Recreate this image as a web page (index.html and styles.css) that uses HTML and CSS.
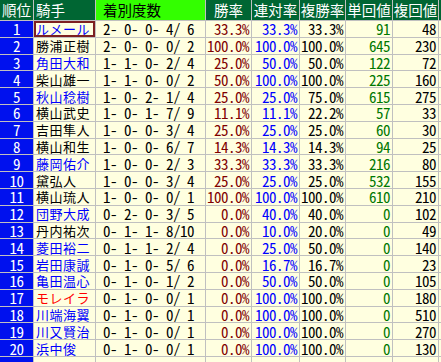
FILE: index.html
```html
<!DOCTYPE html>
<html lang="ja">
<head>
<meta charset="utf-8">
<link rel="stylesheet" href="styles.css">
</head>
<body>
<div class="board">
  <div class="row head">
    <div class="c h h-l">順位</div>
    <div class="c h h-l">騎手</div>
    <div class="c h h-rec">着別度数</div>
    <div class="c h">勝率</div>
    <div class="c h">連対率</div>
    <div class="c h">複勝率</div>
    <div class="c h">単回値</div>
    <div class="c h">複回値</div>
    <div class="c h"></div>
  </div>

  <div class="row"><div class="c rank">1</div><div class="c name blue sel">ルメール</div><div class="c rec">2- 0- 0- 4/ 6</div><div class="c num win">33.3%</div><div class="c num ren">33.3%</div><div class="c num">33.3%</div><div class="c num tan">91</div><div class="c num">48</div><div class="c"></div></div>
  <div class="row"><div class="c rank">2</div><div class="c name">勝浦正樹</div><div class="c rec">2- 0- 0- 0/ 2</div><div class="c num win">100.0%</div><div class="c num ren">100.0%</div><div class="c num">100.0%</div><div class="c num tan">645</div><div class="c num">230</div><div class="c"></div></div>
  <div class="row"><div class="c rank">3</div><div class="c name blue">角田大和</div><div class="c rec">1- 1- 0- 2/ 4</div><div class="c num win">25.0%</div><div class="c num ren">50.0%</div><div class="c num">50.0%</div><div class="c num tan">122</div><div class="c num">72</div><div class="c"></div></div>
  <div class="row"><div class="c rank">4</div><div class="c name">柴山雄一</div><div class="c rec">1- 1- 0- 0/ 2</div><div class="c num win">50.0%</div><div class="c num ren">100.0%</div><div class="c num">100.0%</div><div class="c num tan">225</div><div class="c num">160</div><div class="c"></div></div>
  <div class="row"><div class="c rank">5</div><div class="c name blue">秋山稔樹</div><div class="c rec">1- 0- 2- 1/ 4</div><div class="c num win">25.0%</div><div class="c num ren">25.0%</div><div class="c num">75.0%</div><div class="c num tan">615</div><div class="c num">275</div><div class="c"></div></div>
  <div class="row"><div class="c rank">6</div><div class="c name">横山武史</div><div class="c rec">1- 0- 1- 7/ 9</div><div class="c num win">11.1%</div><div class="c num ren">11.1%</div><div class="c num">22.2%</div><div class="c num tan">57</div><div class="c num">33</div><div class="c"></div></div>
  <div class="row"><div class="c rank">7</div><div class="c name">吉田隼人</div><div class="c rec">1- 0- 0- 3/ 4</div><div class="c num win">25.0%</div><div class="c num ren">25.0%</div><div class="c num">25.0%</div><div class="c num tan">60</div><div class="c num">30</div><div class="c"></div></div>
  <div class="row"><div class="c rank">8</div><div class="c name">横山和生</div><div class="c rec">1- 0- 0- 6/ 7</div><div class="c num win">14.3%</div><div class="c num ren">14.3%</div><div class="c num">14.3%</div><div class="c num tan">94</div><div class="c num">25</div><div class="c"></div></div>
  <div class="row"><div class="c rank">9</div><div class="c name blue">藤岡佑介</div><div class="c rec">1- 0- 0- 2/ 3</div><div class="c num win">33.3%</div><div class="c num ren">33.3%</div><div class="c num">33.3%</div><div class="c num tan">216</div><div class="c num">80</div><div class="c"></div></div>
  <div class="row"><div class="c rank">10</div><div class="c name">黛弘人</div><div class="c rec">1- 0- 0- 3/ 4</div><div class="c num win">25.0%</div><div class="c num ren">25.0%</div><div class="c num">25.0%</div><div class="c num tan">532</div><div class="c num">155</div><div class="c"></div></div>
  <div class="row"><div class="c rank">11</div><div class="c name">横山琉人</div><div class="c rec">1- 0- 0- 0/ 1</div><div class="c num win">100.0%</div><div class="c num ren">100.0%</div><div class="c num">100.0%</div><div class="c num tan">610</div><div class="c num">210</div><div class="c"></div></div>
  <div class="row"><div class="c rank">12</div><div class="c name blue">団野大成</div><div class="c rec">0- 2- 0- 3/ 5</div><div class="c num win">0.0%</div><div class="c num ren">40.0%</div><div class="c num">40.0%</div><div class="c num tan">0</div><div class="c num">102</div><div class="c"></div></div>
  <div class="row"><div class="c rank">13</div><div class="c name">丹内祐次</div><div class="c rec">0- 1- 1- 8/10</div><div class="c num win">0.0%</div><div class="c num ren">10.0%</div><div class="c num">20.0%</div><div class="c num tan">0</div><div class="c num">49</div><div class="c"></div></div>
  <div class="row"><div class="c rank">14</div><div class="c name blue">菱田裕二</div><div class="c rec">0- 1- 1- 2/ 4</div><div class="c num win">0.0%</div><div class="c num ren">25.0%</div><div class="c num">50.0%</div><div class="c num tan">0</div><div class="c num">140</div><div class="c"></div></div>
  <div class="row"><div class="c rank">15</div><div class="c name blue">岩田康誠</div><div class="c rec">0- 1- 0- 5/ 6</div><div class="c num win">0.0%</div><div class="c num ren">16.7%</div><div class="c num">16.7%</div><div class="c num tan">0</div><div class="c num">23</div><div class="c"></div></div>
  <div class="row"><div class="c rank">16</div><div class="c name blue">亀田温心</div><div class="c rec">0- 1- 0- 1/ 2</div><div class="c num win">0.0%</div><div class="c num ren">50.0%</div><div class="c num">50.0%</div><div class="c num tan">0</div><div class="c num">105</div><div class="c"></div></div>
  <div class="row"><div class="c rank">17</div><div class="c name red">モレイラ</div><div class="c rec">0- 1- 0- 0/ 1</div><div class="c num win">0.0%</div><div class="c num ren">100.0%</div><div class="c num">100.0%</div><div class="c num tan">0</div><div class="c num">180</div><div class="c"></div></div>
  <div class="row"><div class="c rank">18</div><div class="c name blue">川端海翼</div><div class="c rec">0- 1- 0- 0/ 1</div><div class="c num win">0.0%</div><div class="c num ren">100.0%</div><div class="c num">100.0%</div><div class="c num tan">0</div><div class="c num">510</div><div class="c"></div></div>
  <div class="row"><div class="c rank">19</div><div class="c name blue">川又賢治</div><div class="c rec">0- 1- 0- 0/ 1</div><div class="c num win">0.0%</div><div class="c num ren">100.0%</div><div class="c num">100.0%</div><div class="c num tan">0</div><div class="c num">270</div><div class="c"></div></div>
  <div class="row"><div class="c rank">20</div><div class="c name blue">浜中俊</div><div class="c rec">0- 1- 0- 0/ 1</div><div class="c num win">0.0%</div><div class="c num ren">100.0%</div><div class="c num">100.0%</div><div class="c num tan">0</div><div class="c num">130</div><div class="c"></div></div>
  <div class="row"><div class="c rank"></div><div class="c"></div><div class="c"></div><div class="c"></div><div class="c"></div><div class="c"></div><div class="c"></div><div class="c"></div><div class="c"></div></div>
</div>
</body>
</html>
```

FILE: styles.css
```css
html, body {
  margin: 0;
  padding: 0;
  background: #ffffff;
  overflow: hidden;
}

.board {
  display: grid;
  grid-template-columns: 33px 61px 109px 45px 47px 45px 46px 45px 20px;
  grid-template-rows: 20px repeat(21, 15.8px);
  gap: 1px;
  background: #c0c0c0;
  width: max-content;
  font-family: "Noto Sans Mono CJK JP", "DejaVu Sans Mono", monospace;
  font-size: 15px;
  letter-spacing: -0.5px;
}

.row {
  display: contents;
}

.c {
  display: flex;
  align-items: center;
  background: #ffffe0;
  color: #000000;
  overflow: hidden;
  white-space: pre;
  line-height: 15px;
}

.h {
  background: #006633;
  color: #ffffff;
  justify-content: center;
  font-family: "Noto Sans CJK JP", sans-serif;
  font-size: 14.5px;
  letter-spacing: 0;
  line-height: 18px;
}

.h-l {
  justify-content: flex-start;
  padding-left: 2px;
}

.h-rec {
  background: #33ff00;
  color: #000000;
  justify-content: flex-start;
  padding-left: 7px;
}

.rank {
  background: #0011ee;
  color: #ffffff;
  justify-content: center;
}

.name {
  font-family: "Noto Sans CJK JP", sans-serif;
  font-size: 13px;
  letter-spacing: 0.5px;
  padding-left: 2px;
}

.sel {
  box-shadow: inset 0 0 0 2px #7d2020;
}

.blue {
  color: #0000ff;
}

.red {
  color: #ff0000;
}

.rec {
  padding-left: 7px;
}

.num {
  justify-content: flex-end;
  padding-right: 2px;
}

.win {
  color: #800000;
}

.ren {
  color: #0000ff;
}

.tan {
  color: #007700;
}
```
